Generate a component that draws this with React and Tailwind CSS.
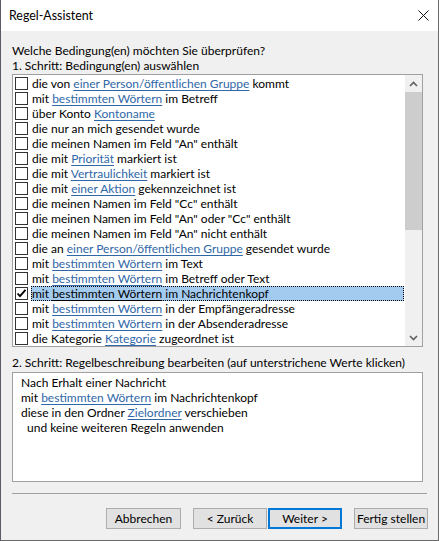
import React from "react";

const rows = [
  [["die von "], ["einer Person/öffentlichen Gruppe", 1], [" kommt"]],
  [["mit "], ["bestimmten Wörtern", 1], [" im Betreff"]],
  [["über Konto "], ["Kontoname", 1]],
  [["die nur an mich gesendet wurde"]],
  [["die meinen Namen im Feld \"An\" enthält"]],
  [["die mit "], ["Priorität", 1], [" markiert ist"]],
  [["die mit "], ["Vertraulichkeit", 1], [" markiert ist"]],
  [["die mit "], ["einer Aktion", 1], [" gekennzeichnet ist"]],
  [["die meinen Namen im Feld \"Cc\" enthält"]],
  [["die meinen Namen im Feld \"An\" oder \"Cc\" enthält"]],
  [["die meinen Namen im Feld \"An\" nicht enthält"]],
  [["die an "], ["einer Person/öffentlichen Gruppe", 1], [" gesendet wurde"]],
  [["mit "], ["bestimmten Wörtern", 1], [" im Text"]],
  [["mit "], ["bestimmten Wörtern", 1], [" im Betreff oder Text"]],
  [["mit "], ["bestimmten Wörtern", 1], [" im Nachrichtenkopf"]],
  [["mit "], ["bestimmten Wörtern", 1], [" in der Empfängeradresse"]],
  [["mit "], ["bestimmten Wörtern", 1], [" in der Absenderadresse"]],
  [["die Kategorie "], ["Kategorie", 1], [" zugeordnet ist"]],
];

const FONT = "font-['Lato',sans-serif]";

function Seg({ parts, selected }) {
  return parts.map(([t, link], i) =>
    link ? (
      <span
        key={i}
        className={
          selected
            ? "underline decoration-black underline-offset-2"
            : "text-[#2f67a8] underline decoration-[#2f67a8] underline-offset-2"
        }
      >
        {t}
      </span>
    ) : (
      <span key={i}>{t}</span>
    )
  );
}

function Check({ checked }) {
  return (
    <div className="w-[13px] h-[13px] border border-[#333333] bg-white flex items-center justify-center shrink-0">
      {checked && (
        <svg width="11" height="11" viewBox="0 0 11 11">
          <path d="M1.5 5.5 L4 8.2 L9.5 1.8" fill="none" stroke="#000" strokeWidth="1.8" />
        </svg>
      )}
    </div>
  );
}

function Btn({ children, primary, w }) {
  return (
    <div
      className={
        "h-[21px] flex items-center justify-center bg-[#e1e1e1] text-[12px] text-black whitespace-nowrap " +
        (primary ? "border-2 border-[#0078d7] " : "border border-[#adadad] ") +
        w
      }
    >
      {children}
    </div>
  );
}

export default function App() {
  return (
    <div className={`w-[439px] h-[541px] bg-[#f0f0f0] flex flex-col border-l border-r border-b border-l-[#5c5a66] border-r-[#6a6a6a] border-b-[#6a6a6a] text-[12px] leading-[15px] text-black ${FONT}`}>
      <div className="h-[31px] bg-white flex items-center justify-between pl-[8px] pr-[9px] shrink-0">
        <span className="text-[12.4px]">Regel-Assistent</span>
        <svg width="11" height="11" viewBox="0 0 11 11">
          <path d="M0.5 0.5 L10.5 10.5 M10.5 0.5 L0.5 10.5" stroke="#111" strokeWidth="1" />
        </svg>
      </div>
      <div className="flex flex-col pl-[11px] pr-[10px]">
        <div className="mt-[12px] h-[15px] whitespace-nowrap">Welche Bedingung(en) möchten Sie überprüfen?</div>
        <div className="h-[15px] whitespace-nowrap">1. Schritt: Bedingung(en) auswählen</div>
        <div className="mt-[1px] h-[273px] w-[411px] border border-[#a0a0a0] bg-white flex">
          <div className="flex-1 flex flex-col pt-[1px]">
            {rows.map((r, i) => {
              const sel = i === 14;
              return (
                <div key={i} className="h-[15px] flex items-center pl-[2px]">
                  <Check checked={sel} />
                  <div
                    className={
                      "ml-[3px] mr-[1px] flex-1 h-[15px] pl-[1px] whitespace-nowrap overflow-hidden " +
                      (sel ? "bg-[#a3cbef] outline-1 outline-dotted outline-black -outline-offset-1" : "")
                    }
                  >
                    <Seg parts={r} selected={sel} />
                  </div>
                </div>
              );
            })}
          </div>
          <div className="w-[17px] bg-[#f0f0f0] flex flex-col">
            <div className="h-[17px] flex items-center justify-center">
              <svg width="9" height="6" viewBox="0 0 9 6">
                <path d="M1 5 L4.5 1.5 L8 5" fill="none" stroke="#606060" strokeWidth="1.6" />
              </svg>
            </div>
            <div className="h-[138px] bg-[#cdcdcd]" />
            <div className="flex-1" />
            <div className="h-[17px] flex items-center justify-center">
              <svg width="9" height="6" viewBox="0 0 9 6">
                <path d="M1 1 L4.5 4.5 L8 1" fill="none" stroke="#606060" strokeWidth="1.6" />
              </svg>
            </div>
          </div>
        </div>
        <div className="mt-[8px] h-[15px] whitespace-nowrap">
          2. Schritt: Regelbeschreibung bearbeiten (auf unterstrichene Werte klicken)
        </div>
        <div className="mt-[2px] h-[110px] w-[411px] border border-[#a0a0a0] bg-white pt-[2px] pl-[8px]">
          <div className="h-[15px]">Nach Erhalt einer Nachricht</div>
          <div className="h-[15px]">
            mit <span className="text-[#2f67a8] underline underline-offset-2">bestimmten Wörtern</span> im Nachrichtenkopf
          </div>
          <div className="h-[15px]">
            diese in den Ordner <span className="text-[#2f67a8] underline underline-offset-2">Zielordner</span> verschieben
          </div>
          <div className="h-[15px] pl-[6px]">und keine weiteren Regeln anwenden</div>
        </div>
        <div className="mt-[11px] h-px w-[415px] bg-[#a0a0a0]" />
        <div className="mt-[14px] flex justify-end">
          <Btn w="w-[75px] mr-[12px]">Abbrechen</Btn>
          <Btn w="w-[74px] mr-[1px]">&lt; Zurück</Btn>
          <Btn primary w="w-[74px] mr-[12px]">Weiter &gt;</Btn>
          <Btn w="w-[74px]">Fertig stellen</Btn>
        </div>
      </div>
    </div>
  );
}
